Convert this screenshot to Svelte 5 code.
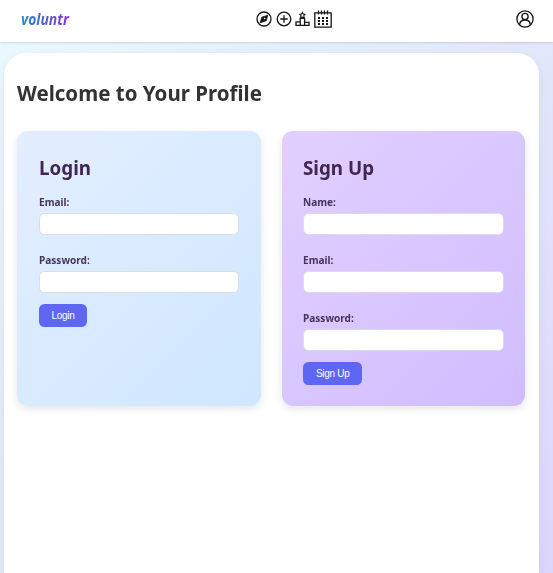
<script lang="ts">
	interface Field {
		id: string;
		label: string;
		type: string;
	}

	const loginFields: Field[] = [
		{ id: 'login-email', label: 'Email:', type: 'email' },
		{ id: 'login-password', label: 'Password:', type: 'password' }
	];

	const signupFields: Field[] = [
		{ id: 'signup-name', label: 'Name:', type: 'text' },
		{ id: 'signup-email', label: 'Email:', type: 'email' },
		{ id: 'signup-password', label: 'Password:', type: 'password' }
	];

	const forms = [
		{ name: 'login', title: 'Login', fields: loginFields },
		{ name: 'signup', title: 'Sign Up', fields: signupFields }
	];

	function handleSubmit(e: Event) {
		e.preventDefault();
	}
</script>

<header class="navbar">
	<div class="brand"><span class="logo">voluntr</span></div>

	<nav class="nav-icons">
		<!-- Explore -->
		<svg width="16" height="16" viewBox="0 0 16 16" fill="none" stroke="currentColor">
			<circle cx="8" cy="8" r="7" stroke-width="1.3" />
			<path d="M11.8 4.2 10.2 9.8 4.2 11.8 5.8 6.2Z" fill="currentColor" stroke-width="0.8" />
			<circle cx="8.6" cy="7.5" r="0.8" fill="#fff" stroke="none" />
		</svg>
		<!-- Create -->
		<svg width="16" height="16" viewBox="0 0 16 16" fill="none" stroke="currentColor" stroke-width="1.3">
			<circle cx="8" cy="8" r="6.8" />
			<path d="M8 4.3v7.4M4.3 8h7.4" />
		</svg>
		<!-- Leaderboard -->
		<svg width="15" height="16" viewBox="0 0 15 16" fill="none" stroke="currentColor" stroke-width="1.3">
			<path d="M1 14.4v-3.6h4.2V7.4h4.4v4h4.4v3ZM5.2 10.8v3.6M9.6 11.4v3" />
			<path d="M7.4 1.4 8.2 3l1.8.4-1.2 1.3.4 2.1-1.8-.8-1.8.8.4-2.1-1.2-1.3L6.6 3Z" stroke-width="1.1" />
		</svg>
		<!-- Calendar -->
		<svg width="18" height="18" viewBox="0 0 18 18" fill="none" stroke="currentColor">
			<path d="M.8 2.8h16.4v14.4H.8ZM4.5.6v4M7.5.6v4M10.5.6v4M13.5.6v4" stroke-width="1.3" />
			<path d="M4 8.1h10M4 11.1h10M4 14.1h10" stroke-width="2" stroke-dasharray="2 2" />
		</svg>
	</nav>

	<div class="account">
		<svg width="18" height="18" viewBox="0 0 18 18" fill="none" stroke="currentColor" stroke-width="1.3">
			<circle cx="9" cy="9" r="8.1" />
			<circle cx="9" cy="6.5" r="3.1" />
			<path d="M3.5 14.8c.4-3.2 2.6-4.8 5.5-4.8s5.1 1.6 5.5 4.8" />
		</svg>
	</div>
</header>

<main class="panel">
	<h1>Welcome to Your Profile</h1>

	<div class="cards">
		{#each forms as form}
			<form class="card {form.name}" onsubmit={handleSubmit}>
				<h2>{form.title}</h2>
				{#each form.fields as field}
					<div class="field">
						<label for={field.id}>{field.label}</label>
						<input id={field.id} type={field.type} />
					</div>
				{/each}
				<button type="submit">{form.title}</button>
			</form>
		{/each}
	</div>
</main>

<style>
	:global(body) {
		margin: 0;
		height: 573px;
		overflow: hidden;
		background: linear-gradient(135deg, #eaf9ff 0%, #e2e8fa 48%, #dcd5fb 100%);
		font-family: 'Segoe UI', 'Noto Sans', 'Open Sans', sans-serif;
	}

	/* Navbar */
	.navbar {
		box-sizing: border-box;
		height: 42px;
		padding: 0 19px 4px 21px;
		display: flex;
		justify-content: space-between;
		align-items: center;
		background: #fff;
		color: #151515;
		box-shadow: 0 1px 2px rgba(0, 0, 0, 0.12);
	}

	.brand {
		width: 51px;
	}

	.logo {
		display: inline-block;
		padding-right: 3px;
		font-size: 16px;
		font-weight: 700;
		font-style: italic;
		line-height: 20px;
		transform: scaleX(0.87);
		transform-origin: left;
		background: linear-gradient(90deg, #2b86bd 0%, #4b62c8 45%, #8a2be2 100%);
		background-clip: text;
		-webkit-background-clip: text;
		color: transparent;
	}

	.nav-icons {
		display: flex;
		align-items: center;
		gap: 3.7px;
	}

	.nav-icons svg,
	.account svg {
		display: block;
	}

	/* Page panel */
	.panel {
		box-sizing: border-box;
		width: 535.5px;
		height: 520px;
		margin: 11px 0 0 3.5px;
		padding: 23px 14px 0 13.5px;
		background: #fff;
		border-radius: 22px 22px 0 0;
		box-shadow: 0 3px 10px rgba(0, 0, 0, 0.06);
	}

	/* Slightly condensed headings and labels */
	h1,
	h2,
	label {
		transform: scaleX(0.932);
		transform-origin: left;
	}

	h1 {
		margin: 0 0 22.5px;
		font-size: 22px;
		line-height: 32px;
		color: #333;
	}

	.cards {
		display: grid;
		grid-template-columns: 1fr 1fr;
		gap: 21px;
	}

	.card {
		box-sizing: border-box;
		height: 275.5px;
		padding: 21.5px 21.5px 0;
		border-radius: 11px;
		box-shadow: 0 3px 8px rgba(0, 0, 0, 0.1);
	}

	.login {
		background: linear-gradient(135deg, #e3eeff 0%, #cfe7ff 100%);
	}

	.signup {
		background: linear-gradient(135deg, #e1d0ff 0%, #d0bdff 100%);
	}

	h2 {
		margin: 0 0 11px;
		font-size: 20px;
		line-height: 32px;
		color: #432752;
		transform: scaleX(0.94);
	}

	.field {
		margin-bottom: 18px;
		height: 40px;
	}

	label {
		display: block;
		font-size: 11px;
		font-weight: 700;
		line-height: 14px;
		margin-bottom: 4px;
		color: #46345a;
		transform: scaleX(0.915);
	}

	input {
		box-sizing: border-box;
		display: block;
		width: 100%;
		height: 22px;
		padding: 0 8px;
		background: #fff;
		border: 1px solid #ddd;
		border-radius: 5.5px;
	}

	.signup input {
		border-color: #e0d6f2;
	}

	button {
		display: block;
		height: 23px;
		margin-top: -7px;
		padding: 0 13px;
		background: #5f67f2;
		color: #fff;
		border: none;
		border-radius: 5.5px;
		font-family: 'Liberation Sans', Arial, sans-serif;
		font-size: 10px;
		letter-spacing: -0.3px;
	}
</style>
